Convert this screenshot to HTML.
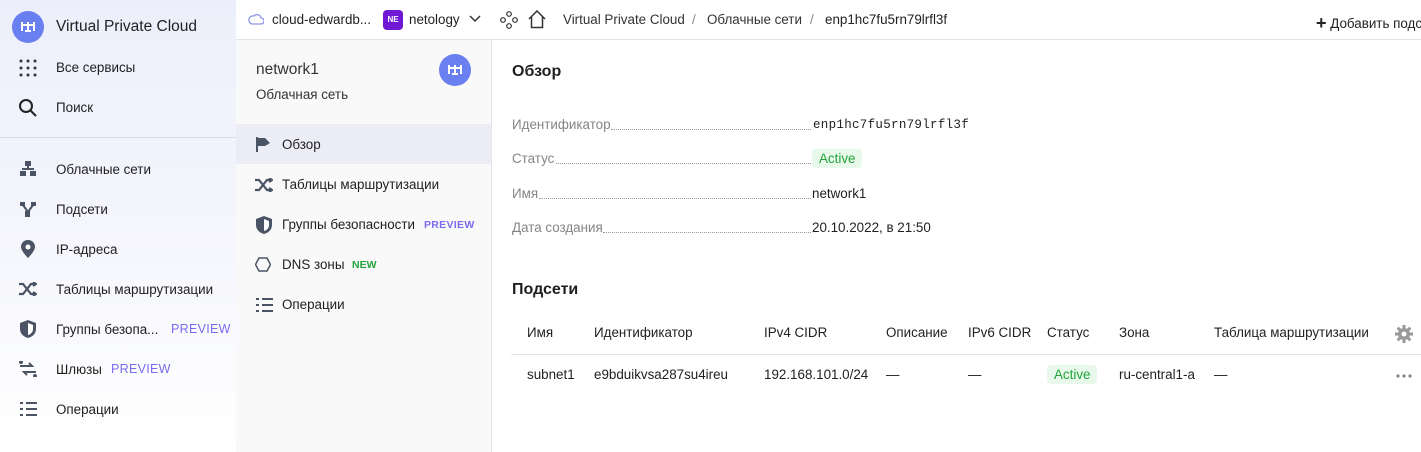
<!DOCTYPE html>
<html><head><meta charset="utf-8"><style>
*{margin:0;padding:0;box-sizing:border-box}
body{width:1421px;height:452px;overflow:hidden;font-family:"Liberation Sans","Noto Sans CJK SC",sans-serif;font-size:13.4px;color:#1f1f1f;position:relative;background:#fff}
.abs{position:absolute;white-space:nowrap}
#left{position:absolute;left:0;top:0;width:236px;height:452px;background:linear-gradient(180deg,#eceffb 0%,#f3f4fc 40%,#fff 100%)}
#mid{position:absolute;left:236px;top:40px;width:256px;height:412px;background:#f9f9f9;border-right:1px solid #e6e6e6}
#top{position:absolute;left:236px;top:0;width:1185px;height:40px;background:#fff;border-bottom:1px solid #e5e5e5}
.ic{position:absolute}
.prev{color:#7a6cf0;font-size:12.5px;letter-spacing:.3px}
.lbl{color:#858585}
.dots{position:absolute;border-bottom:1px dotted #999;height:1px}
.badge{background:#e8f8ea;color:#22a33a;border-radius:4px;padding:2px 7px}
.logo{position:absolute;width:32px;height:32px;border-radius:50%;background:#6a7ff0}
</style></head><body>
<div id="left">
  <div class="logo" style="left:12px;top:11px"><svg width="32" height="32" fill="none" stroke="#fff" stroke-width="2"><path d="M10 11v9M16 11v9M22 11v9M9 14h14M13 20h6"/></svg></div>
  <div class="abs" style="left:56px;top:18px;font-size:15.5px;color:#222">Virtual Private Cloud</div>
  <svg class="ic" style="left:19px;top:59px" width="18" height="18"><g fill="#333"><circle cx="2" cy="2" r="1.5"/><circle cx="9" cy="2" r="1.5"/><circle cx="16" cy="2" r="1.5"/><circle cx="2" cy="9" r="1.5"/><circle cx="9" cy="9" r="1.5"/><circle cx="16" cy="9" r="1.5"/><circle cx="2" cy="16" r="1.5"/><circle cx="9" cy="16" r="1.5"/><circle cx="16" cy="16" r="1.5"/></g></svg>
  <div class="abs" style="left:56px;top:60px">Все сервисы</div>
  <svg class="ic" style="left:18px;top:98px" width="20" height="20"><circle cx="8" cy="8" r="6" fill="none" stroke="#222" stroke-width="2"/><path d="M12.5 12.5L18 18" stroke="#222" stroke-width="2"/></svg>
  <div class="abs" style="left:56px;top:100px">Поиск</div>
  <div style="position:absolute;left:0;top:137px;width:236px;height:1px;background:#dcdce6"></div>
  <svg class="ic" style="left:20px;top:161px" width="16" height="16" fill="#4a5465"><rect x="5" y="0" width="6" height="5"/><rect x="0" y="10" width="6" height="5"/><rect x="10" y="10" width="6" height="5"/><rect x="7" y="5" width="2" height="3"/><rect x="2" y="7" width="12" height="2"/></svg>
  <div class="abs" style="left:56px;top:162px">Облачные сети</div>
  <svg class="ic" style="left:20px;top:202px" width="16" height="16" fill="#4a5465"><rect x="0" y="0" width="5" height="4"/><rect x="11" y="0" width="5" height="4"/><rect x="5" y="9" width="5" height="6"/><path d="M3 3L8 10L13 3" stroke="#4a5465" stroke-width="2" fill="none"/></svg>
  <div class="abs" style="left:56px;top:202px">Подсети</div>
  <svg class="ic" style="left:21px;top:240px" width="14" height="18"><path d="M7 0C3 0 0 3 0 7c0 4 7 11 7 11s7-7 7-11c0-4-3-7-7-7z" fill="#4a5465"/><circle cx="7" cy="7" r="2.5" fill="#fff"/></svg>
  <div class="abs" style="left:56px;top:242px">IP-адреса</div>
  <svg class="ic" style="left:19px;top:282px" width="18" height="14" fill="none" stroke="#4a5465" stroke-width="2.2"><path d="M0 2h4l8 10h5M0 12h4l8-10h5M14 0l3 2-3 2M14 10l3 2-3 2"/></svg>
  <div class="abs" style="left:56px;top:282px">Таблицы маршрутизации</div>
  <svg class="ic" style="left:20px;top:320px" width="16" height="18"><path d="M8 0L0 3v6c0 5 4 8 8 9 4-1 8-4 8-9V3z" fill="#4a5465"/><path d="M8 3v12c3-1 5-3 5-6V5z" fill="#fff"/></svg>
  <div class="abs" style="left:56px;top:322px">Группы безопа...</div>
  <div class="abs prev" style="left:171px;top:322px">PREVIEW</div>
  <svg class="ic" style="left:19px;top:361px" width="18" height="16" fill="none" stroke="#4a5465" stroke-width="2"><path d="M1 5h12l-3-3M17 11H5l3 3"/><circle cx="2" cy="1" r="1" fill="#4a5465"/><circle cx="16" cy="15" r="1" fill="#4a5465"/></svg>
  <div class="abs" style="left:56px;top:362px">Шлюзы</div>
  <div class="abs prev" style="left:111px;top:362px">PREVIEW</div>
  <svg class="ic" style="left:20px;top:401px" width="17" height="15" fill="#4a5465"><rect x="6" y="1" width="11" height="2"/><rect x="6" y="7" width="11" height="2"/><rect x="6" y="13" width="11" height="2"/><rect x="0" y="1" width="3" height="2"/><rect x="0" y="7" width="3" height="2"/><rect x="0" y="13" width="3" height="2"/></svg>
  <div class="abs" style="left:56px;top:402px">Операции</div>
</div>

<div id="top">
  <svg class="ic" style="left:12px;top:13px" width="16" height="12"><path d="M4 11h9a3 3 0 0 0 0-6 4 4 0 0 0-7-2 3.5 3.5 0 0 0-2 8z" fill="none" stroke="#8f96e8" stroke-width="1.3"/></svg>
  <div class="abs" style="left:36px;top:12px">cloud-edwardb...</div>
  <div style="position:absolute;left:147px;top:10px;width:20px;height:20px;border-radius:4px;background:#6f19d6;color:#fff;font-size:8px;font-weight:bold;text-align:center;line-height:20px">NE</div>
  <div class="abs" style="left:173px;top:12px">netology</div>
  <svg class="ic" style="left:233px;top:15px" width="12" height="8"><path d="M1 1l5 5 5-5" fill="none" stroke="#333" stroke-width="1.5"/></svg>
  <svg class="ic" style="left:264px;top:11px" width="18" height="18" fill="none" stroke="#333" stroke-width="1.2"><circle cx="9" cy="3" r="2.3"/><circle cx="3" cy="9" r="2.3"/><circle cx="15" cy="9" r="2.3"/><circle cx="9" cy="15" r="2.3"/></svg>
  <svg class="ic" style="left:292px;top:10px" width="18" height="19" fill="none" stroke="#333" stroke-width="1.5"><path d="M1 9L9 1l8 8M3.5 7v10.5h11V7"/></svg>
  <div class="abs" style="left:327px;top:12px;color:#333">Virtual Private Cloud</div>
  <div class="abs" style="left:456px;top:12px;color:#888">/</div>
  <div class="abs" style="left:471px;top:12px;color:#333">Облачные сети</div>
  <div class="abs" style="left:574px;top:12px;color:#888">/</div>
  <div class="abs" style="left:589px;top:12px;color:#222">enp1hc7fu5rn79lrfl3f</div>
  <div class="abs" style="left:1080px;top:12px;color:#222"><span style="font-size:18px;font-weight:bold;position:relative;top:1px">+</span> Добавить подсеть</div>
</div>

<div id="mid">
  <div class="abs" style="left:20px;top:21px;font-size:15.5px;color:#333">network1</div>
  <div class="abs" style="left:20px;top:47px;color:#333">Облачная сеть</div>
  <div class="logo" style="left:203px;top:14px"><svg width="32" height="32" fill="none" stroke="#fff" stroke-width="2"><path d="M10 11v9M16 11v9M22 11v9M9 14h14M13 20h6"/></svg></div>
  <div style="position:absolute;left:0;top:84px;width:255px;height:40px;background:#ebecf6"></div>
  <svg class="ic" style="left:20px;top:97px" width="16" height="15" fill="#4a5465"><rect x="0" y="0" width="2" height="15"/><path d="M2 1h7l5 5-5 3H2z"/></svg>
  <div class="abs" style="left:46px;top:97px">Обзор</div>
  <svg class="ic" style="left:19px;top:138px" width="18" height="14" fill="none" stroke="#4a5465" stroke-width="2.2"><path d="M0 2h4l8 10h5M0 12h4l8-10h5M14 0l3 2-3 2M14 10l3 2-3 2"/></svg>
  <div class="abs" style="left:46px;top:137px">Таблицы маршрутизации</div>
  <svg class="ic" style="left:20px;top:176px" width="16" height="18"><path d="M8 0L0 3v6c0 5 4 8 8 9 4-1 8-4 8-9V3z" fill="#4a5465"/><path d="M8 3v12c3-1 5-3 5-6V5z" fill="#fff"/></svg>
  <div class="abs" style="left:46px;top:177px">Группы безопасности</div>
  <div class="abs prev" style="left:188px;top:179px;font-size:10.5px;font-weight:bold">PREVIEW</div>
  <svg class="ic" style="left:19px;top:217px" width="16" height="15"><path d="M4 1h8l3.5 6.5L12 14H4L.5 7.5z" fill="none" stroke="#4a5465" stroke-width="1.5"/></svg>
  <div class="abs" style="left:46px;top:217px">DNS зоны</div>
  <div class="abs" style="left:116px;top:219px;font-size:10.5px;font-weight:bold;color:#22a33a">NEW</div>
  <svg class="ic" style="left:20px;top:257px" width="17" height="15" fill="#4a5465"><rect x="6" y="1" width="11" height="2"/><rect x="6" y="7" width="11" height="2"/><rect x="6" y="13" width="11" height="2"/><rect x="0" y="1" width="3" height="2"/><rect x="0" y="7" width="3" height="2"/><rect x="0" y="13" width="3" height="2"/></svg>
  <div class="abs" style="left:46px;top:257px">Операции</div>
</div>

<div class="abs" style="left:512px;top:63px;font-size:16px;font-weight:bold">Обзор</div>
<div class="abs lbl" style="left:512px;top:117px">Идентификатор</div><div class="dots" style="left:611px;width:200px;top:129px"></div>
<div class="abs" style="left:813px;top:118px;font-family:'Liberation Mono',monospace;font-size:12.5px;letter-spacing:.3px">enp1hc7fu5rn79lrfl3f</div>
<div class="abs lbl" style="left:512px;top:151px">Статус</div><div class="dots" style="left:556px;width:255px;top:163px"></div>
<div class="abs badge" style="left:812px;top:149px">Active</div>
<div class="abs lbl" style="left:512px;top:186px">Имя</div><div class="dots" style="left:539px;width:272px;top:198px"></div>
<div class="abs" style="left:812px;top:186px">network1</div>
<div class="abs lbl" style="left:512px;top:220px">Дата создания</div><div class="dots" style="left:603px;width:208px;top:232px"></div>
<div class="abs" style="left:812px;top:220px">20.10.2022, в 21:50</div>

<div class="abs" style="left:512px;top:281px;font-size:16px;font-weight:bold">Подсети</div>
<div class="abs" style="left:527px;top:325px">Имя</div>
<div class="abs" style="left:594px;top:325px">Идентификатор</div>
<div class="abs" style="left:764px;top:325px">IPv4 CIDR</div>
<div class="abs" style="left:886px;top:325px">Описание</div>
<div class="abs" style="left:968px;top:325px">IPv6 CIDR</div>
<div class="abs" style="left:1047px;top:325px">Статус</div>
<div class="abs" style="left:1119px;top:325px">Зона</div>
<div class="abs" style="left:1214px;top:325px">Таблица маршрутизации</div>
<svg class="ic" style="left:1395px;top:325px" width="18" height="18"><g fill="#999"><circle cx="9" cy="9" r="6"/><rect x="7.5" y="0" width="3" height="18"/><rect x="0" y="7.5" width="18" height="3"/><rect x="7.5" y="0" width="3" height="18" transform="rotate(45 9 9)"/><rect x="7.5" y="0" width="3" height="18" transform="rotate(-45 9 9)"/></g><circle cx="9" cy="9" r="2.5" fill="#fff"/></svg>
<div style="position:absolute;left:511px;top:354px;width:910px;height:1px;background:#e5e5e5"></div>
<div class="abs" style="left:527px;top:367px">subnet1</div>
<div class="abs" style="left:594px;top:367px">e9bduikvsa287su4ireu</div>
<div class="abs" style="left:764px;top:367px">192.168.101.0/24</div>
<div class="abs" style="left:886px;top:367px">—</div>
<div class="abs" style="left:968px;top:367px">—</div>
<div class="abs badge" style="left:1047px;top:365px">Active</div>
<div class="abs" style="left:1119px;top:367px">ru-central1-a</div>
<div class="abs" style="left:1214px;top:367px">—</div>
<svg class="ic" style="left:1396px;top:374px" width="16" height="4" fill="#888"><circle cx="2" cy="2" r="1.6"/><circle cx="8" cy="2" r="1.6"/><circle cx="14" cy="2" r="1.6"/></svg>
</body></html>
